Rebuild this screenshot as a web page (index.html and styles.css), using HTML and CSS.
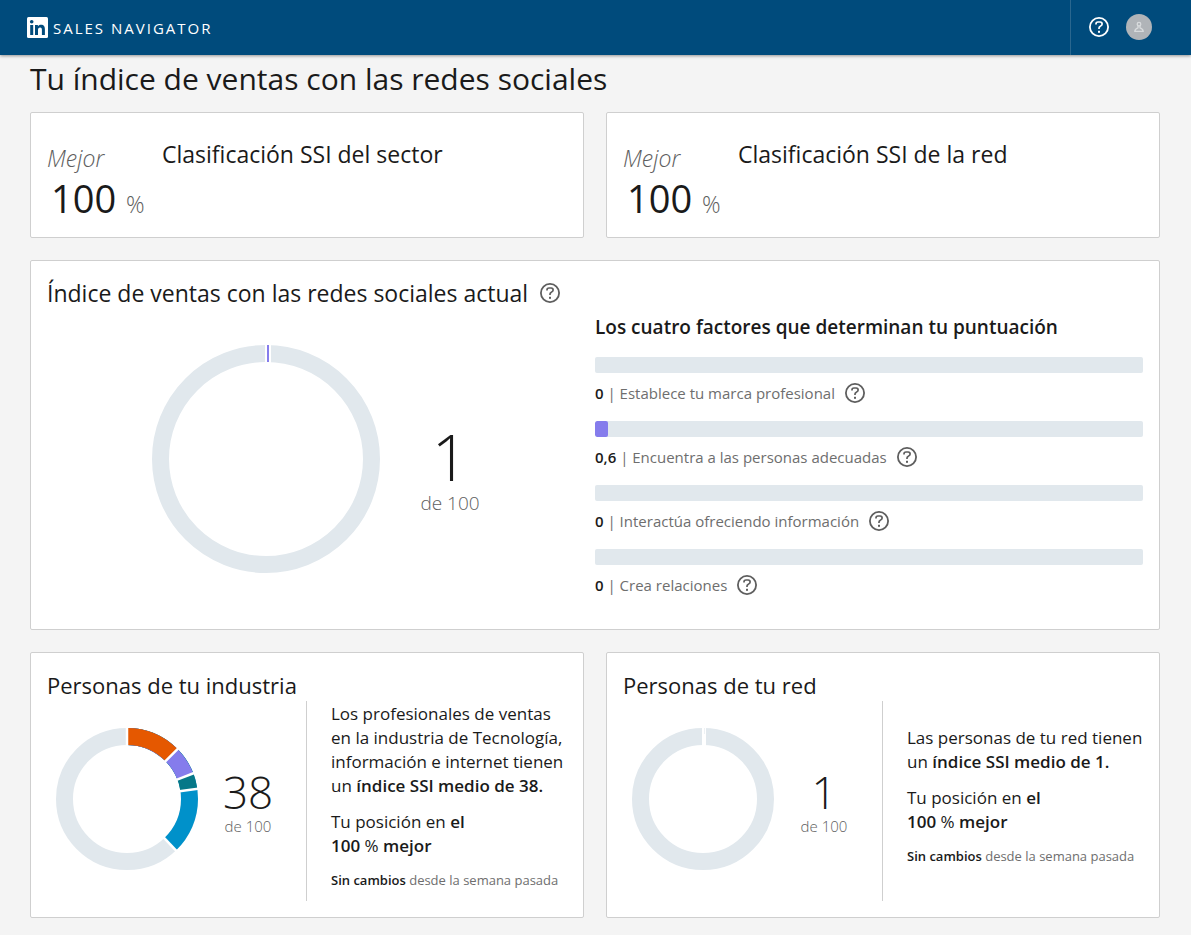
FILE: index.html
```html
<!DOCTYPE html>
<html lang="es">
<head>
<meta charset="utf-8">
<title>Sales Navigator</title>
<link rel="stylesheet" href="styles.css">
</head>
<body>
<svg class="defs" aria-hidden="true">
  <symbol id="help" viewBox="0 0 20 20">
    <circle cx="10" cy="10" r="9.100" fill="none" stroke="currentColor" stroke-width="1.800"/>
    <path d="M7 7.500V7a2 2 0 0 1 2-2h2.200a1.900 1.900 0 0 1 1.900 1.900c0 1-.5 1.500-1.300 2l-.8.5c-.7.400-1 .9-1 1.800v.8" fill="none" stroke="currentColor" stroke-width="1.700"/>
    <rect x="9" y="13.800" width="2" height="2" fill="currentColor"/>
  </symbol>
</svg>
<header class="topbar">
  <a class="brand" href="#">
    <svg class="brand-logo" viewBox="0 0 21 21" aria-hidden="true">
      <rect width="21" height="21" rx="1.500" fill="#fff"/>
      <g fill="#004b7c">
        <circle cx="4.700" cy="4.700" r="1.800"/>
        <rect x="3.200" y="8" width="3" height="10"/>
        <path d="M8 8h2.900v1.400c.5-.9 1.600-1.600 3.100-1.600 3 0 3.900 1.900 3.900 4.600V18h-3v-5c0-1.500-.3-2.600-1.800-2.600S11 11.500 11 13v5H8z"/>
      </g>
    </svg>
    <span class="brand-name">SALES NAVIGATOR</span>
  </a>
  <nav class="topbar-tools">
    <button class="icon-button" aria-label="Ayuda"><svg class="icon"><use href="#help"/></svg></button>
    <button class="avatar" aria-label="Perfil">
      <svg viewBox="0 0 26 26" fill="none" stroke="#d8dbdd" stroke-width="1.300"><circle cx="13" cy="10.200" r="1.800"/><path d="M12 12v1.800c-1.900.6-3.200 1.400-3.200 3.600h8.400c0-2.200-1.300-3-3.200-3.600V12"/></svg>
    </button>
  </nav>
</header>
<main class="page">
  <h1 class="page-title">Tu índice de ventas con las redes sociales</h1>
  <div class="grid">
    <section class="card rank">
      <div class="rank-value">
        <div class="rank-label">Mejor</div>
        <div class="rank-number">100 <span class="rank-unit">%</span></div>
      </div>
      <h2 class="card-title">Clasificación SSI del sector</h2>
    </section>
    <section class="card rank">
      <div class="rank-value">
        <div class="rank-label">Mejor</div>
        <div class="rank-number">100 <span class="rank-unit">%</span></div>
      </div>
      <h2 class="card-title">Clasificación SSI de la red</h2>
    </section>

    <section class="card current">
      <div class="current-head">
        <h2 class="card-title">Índice de ventas con las redes sociales actual</h2>
        <button class="icon-button" aria-label="Más información sobre el índice"><svg class="icon"><use href="#help"/></svg></button>
      </div>
      <div class="current-score">
        <svg class="donut-large" viewBox="0 0 228 228" aria-hidden="true">
          <circle cx="114" cy="114" r="105.500" fill="none" stroke="#e1e8ed" stroke-width="17"/>
          <rect x="113" y="0" width="6" height="18" fill="#fff"/>
          <rect x="115" y="0" width="2" height="17" fill="#857cec"/>
        </svg>
        <div class="score score-large"><div class="score-number">1</div><div class="score-total">de 100</div></div>
      </div>
      <div class="factors">
        <h3 class="factors-title">Los cuatro factores que determinan tu puntuación</h3>
        <ul class="factor-list">
          <li><div class="bar"></div><div class="factor"><span><b>0</b> | Establece tu marca profesional</span><button class="icon-button" aria-label="Ayuda: marca profesional"><svg class="icon"><use href="#help"/></svg></button></div></li>
          <li><div class="bar"><div class="bar-fill" style="width:2.4%"></div></div><div class="factor"><span><b>0,6</b> | Encuentra a las personas adecuadas</span><button class="icon-button" aria-label="Ayuda: personas adecuadas"><svg class="icon"><use href="#help"/></svg></button></div></li>
          <li><div class="bar"></div><div class="factor"><span><b>0</b> | Interactúa ofreciendo información</span><button class="icon-button" aria-label="Ayuda: ofrecer información"><svg class="icon"><use href="#help"/></svg></button></div></li>
          <li><div class="bar"></div><div class="factor"><span><b>0</b> | Crea relaciones</span><button class="icon-button" aria-label="Ayuda: relaciones"><svg class="icon"><use href="#help"/></svg></button></div></li>
        </ul>
      </div>
    </section>

    <section class="card people">
      <div class="people-chart">
        <h2 class="card-title">Personas de tu industria</h2>
        <div class="people-score">
          <svg class="donut" viewBox="0 0 142 142" aria-hidden="true">
            <g fill="none" stroke-width="17" transform="rotate(-90 71 71)">
              <circle cx="71" cy="71" r="62.500" stroke="#e1e8ed"/>
              <circle cx="71" cy="71" r="62.500" stroke="#0091ca" pathLength="100" stroke-dasharray="37.900 100"/>
              <circle cx="71" cy="71" r="62.500" stroke="#067888" pathLength="100" stroke-dasharray="22.700 100"/>
              <circle cx="71" cy="71" r="62.500" stroke="#857cec" pathLength="100" stroke-dasharray="19.100 100"/>
              <circle cx="71" cy="71" r="62.500" stroke="#e55800" pathLength="100" stroke-dasharray="12.600 100"/>
            </g>
            <g stroke="#fff" stroke-width="2.500">
              <path d="M71 -1v19"/>
              <path d="M71 -1v19" transform="rotate(45.400 71 71)"/>
              <path d="M71 -1v19" transform="rotate(68.800 71 71)"/>
              <path d="M71 -1v19" transform="rotate(81.700 71 71)"/>
              <path d="M71 -1v19" transform="rotate(136.400 71 71)"/>
            </g>
          </svg>
          <div class="score"><div class="score-number">38</div><div class="score-total">de 100</div></div>
        </div>
      </div>
      <div class="people-text">
        <p>Los profesionales de ventas en la industria de Tecnología, información e internet tienen un <b>índice SSI medio de 38.</b></p>
        <p>Tu posición en <b>el<br>100</b> % <b>mejor</b></p>
        <p class="people-trend"><b>Sin cambios</b> desde la semana pasada</p>
      </div>
    </section>
    <section class="card people">
      <div class="people-chart">
        <h2 class="card-title">Personas de tu red</h2>
        <div class="people-score">
          <svg class="donut" viewBox="0 0 142 142" aria-hidden="true">
            <circle cx="71" cy="71" r="62.500" fill="none" stroke="#e1e8ed" stroke-width="17"/>
            <rect x="70" y="0" width="4" height="18" fill="#fff"/>
            <path d="M72.500 0v6" stroke="#e1e8ed" stroke-width=".6"/>
          </svg>
          <div class="score"><div class="score-number">1</div><div class="score-total">de 100</div></div>
        </div>
      </div>
      <div class="people-text">
        <p>Las personas de tu red tienen un <b>índice SSI medio de 1.</b></p>
        <p>Tu posición en <b>el<br>100</b> % <b>mejor</b></p>
        <p class="people-trend"><b>Sin cambios</b> desde la semana pasada</p>
      </div>
    </section>
  </div>
</main>
</body>
</html>
```
FILE: styles.css
```css
* { box-sizing: border-box; }
body { margin: 0; background: #f4f4f4; color: #1a1a1a; font-family: "Open Sans", "Noto Sans", sans-serif; font-size: 17px; line-height: 24px; }
h1, h2, h3, p, ul { margin: 0; padding: 0; font-weight: 400; }
ul { list-style: none; }
b { font-weight: 600; }
button { padding: 0; border: 0; background: none; color: inherit; cursor: pointer; }
.defs { display: none; }

.topbar { display: flex; justify-content: space-between; height: 55px; padding: 0 39px 0 27px; background: #004b7c; color: #fff; box-shadow: 0 1px 3px rgba(0, 0, 0, .4); }
.brand { display: flex; align-items: center; gap: 5px; color: #fff; text-decoration: none; }
.brand-logo { width: 21px; height: 21px; }
.brand-name { font-size: 15px; letter-spacing: 2px; }
.topbar-tools { display: flex; align-items: center; gap: 17px; padding: 0 0 1px 18px; border-left: 1px solid #2a678f; }
.icon-button { display: flex; color: #5e5e5e; }
.topbar .icon-button { color: #fff; }
.icon { width: 20px; height: 20px; }
.avatar { display: flex; width: 26px; height: 26px; border-radius: 50%; background: #b0b4b8; }
.avatar svg { width: 26px; height: 26px; }

.page { padding: 0 31px 17px 30px; }
.page-title { padding: 4px 0 13px; font-size: 30px; line-height: 40px; }
.grid { display: grid; grid-template-columns: repeat(2, minmax(0, 1fr)); gap: 22px; }
.card { padding: 16px; border: 1px solid #cfcfcf; border-radius: 2px; background: #fff; }
.card-title { font-size: 23px; line-height: 32px; }

.rank { display: flex; padding-top: 25px; padding-bottom: 15px; }
.rank-value { width: 115px; padding-top: 4px; }
.rank-label { color: #5e5e5e; font-size: 23px; font-style: italic; font-weight: 300; line-height: 32px; }
.rank-number { padding-left: 4px; font-size: 38px; line-height: 48px; }
.rank-unit { color: #5e5e5e; font-size: 23px; font-weight: 300; line-height: 24px; }

.current { grid-column: 1 / -1; display: grid; grid-template-columns: 1fr 1fr; grid-template-rows: auto 1fr; padding-bottom: 24px; }
.current-head { display: flex; align-items: center; gap: 12px; grid-column: 1; }
.current-score { display: flex; align-items: center; gap: 32px; grid-column: 1; padding: 36px 0 32px 105px; }
.donut-large { width: 228px; height: 228px; }
.score { width: 60px; text-align: center; }
.score-number { font-size: 44px; font-weight: 300; line-height: 48px; }
.score-total { color: #5e5e5e; font-size: 15px; font-weight: 300; line-height: 20px; white-space: nowrap; }
.score-large { width: 76px; padding-top: 24px; }
.score-large .score-number { font-size: 64px; line-height: 64px; }
.score-large .score-total { font-size: 19px; line-height: 28px; }
.factors { grid-column: 2; grid-row: 1 / 3; padding-top: 38px; }
.factors-title { font-size: 19px; font-weight: 600; line-height: 24px; }
.factor-list { display: grid; gap: 16px; padding-top: 18px; }
.bar { height: 16px; border-radius: 2px; background: #e1e8ed; overflow: hidden; }
.bar-fill { height: 16px; border-radius: 2px; background: #857cec; }
.factor { display: flex; align-items: center; gap: 10px; height: 32px; padding-top: 8px; color: #6e6e6e; font-size: 15px; }
.factor b { color: #1a1a1a; }

.people { display: flex; min-height: 266px; }
.people .card-title { font-size: 22px; }
.people-chart { width: 259px; flex: none; }
.people-score { display: flex; align-items: center; gap: 20px; padding: 27px 0 0 9px; }
.people .score { padding-top: 5px; }
.donut { width: 142px; height: 142px; flex: none; }
.people-text { display: flex; flex-direction: column; justify-content: center; gap: 12px; flex: 1; margin-top: 32px; padding: 0 0 10px 24px; border-left: 1px solid #cfcfcf; }
.people-trend { color: #6e6e6e; font-size: 13px; line-height: 20px; white-space: nowrap; }
.people-trend b { color: #1a1a1a; }
```
